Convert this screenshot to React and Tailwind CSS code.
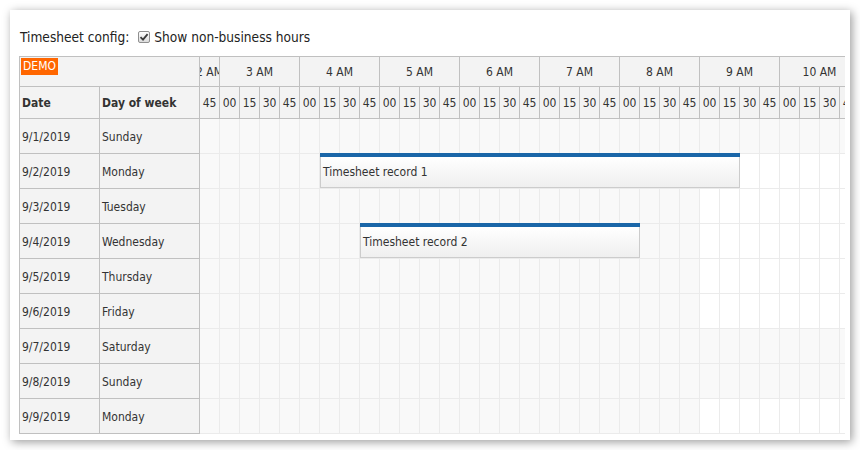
import React from 'react';

const rows = [
  ['9/1/2019', 'Sunday', false],
  ['9/2/2019', 'Monday', true],
  ['9/3/2019', 'Tuesday', true],
  ['9/4/2019', 'Wednesday', true],
  ['9/5/2019', 'Thursday', true],
  ['9/6/2019', 'Friday', true],
  ['9/7/2019', 'Saturday', false],
  ['9/8/2019', 'Sunday', false],
  ['9/9/2019', 'Monday', true],
  ['9/10/2019', 'Tuesday', true],
];

const hours = ['3 AM', '4 AM', '5 AM', '6 AM', '7 AM', '8 AM', '9 AM', '10 AM'];
const minutes = ['45', ...hours.flatMap(() => ['00', '15', '30', '45'])];

const events = [
  { text: 'Timesheet record 1', left: 120, top: 34, width: 420 },
  { text: 'Timesheet record 2', left: 160, top: 104, width: 280 },
];

const Check = () => (
  <span className="w-[12px] h-[12px] border border-[#8f8f8f] rounded-[2px] bg-gradient-to-b from-[#fdfdfd] to-[#dcdcdc] flex items-center justify-center">
    <svg width="10" height="10" viewBox="0 0 10 10">
      <path d="M1.5 5.2 L4 7.6 L8.6 2.2" fill="none" stroke="#3a3a3a" strokeWidth="1.8" />
    </svg>
  </span>
);

export default function App() {
  return (
    <div className="pt-[10px] pl-[10px] bg-white h-[450px] font-['DejaVu_Sans_Condensed','DejaVu_Sans',sans-serif] text-[#333]">
      <div className="w-[840px] h-[430px] bg-white shadow-[2px_2px_9px_rgba(0,0,0,0.4)] pl-[9px] pt-[17px]">
        {/* config row */}
        <div className="flex items-center h-[20px] pl-[1px] text-[13.6px] text-[#222]">
          <span>Timesheet config:</span>
          <label className="flex items-center gap-[4px] ml-[9px]">
            <Check />
            <span>Show non-business hours</span>
          </label>
        </div>

        {/* scheduler */}
        <div className="mt-[9px] w-[826px] h-[378px] overflow-hidden border-l border-t border-[#c0c0c0] flex text-[12px]">
          {/* row headers */}
          <div className="w-[180px] shrink-0 bg-[#f3f3f3]">
            <div className="h-[30px] border-b border-r border-[#c0c0c0] pl-[1px]">
              <span className="inline-block bg-[#ff6600] text-white text-[12px] leading-[17px] px-[2px]">DEMO</span>
            </div>
            <div className="h-[32px] flex border-b border-[#c0c0c0] font-bold">
              <div className="w-[80px] border-r border-[#c0c0c0] flex items-center pl-[2px]">Date</div>
              <div className="w-[100px] border-r border-[#c0c0c0] flex items-center pl-[2px]">Day of week</div>
            </div>
            {rows.map(([d, w]) => (
              <div key={d} className="h-[35px] flex border-b border-[#c0c0c0]">
                <div className="w-[80px] border-r border-[#c0c0c0] flex items-center pl-[2px] pt-[1px]">{d}</div>
                <div className="w-[100px] border-r border-[#c0c0c0] flex items-center pl-[2px] pt-[1px]">{w}</div>
              </div>
            ))}
          </div>

          {/* time area */}
          <div className="flex-1 overflow-hidden">
            <div className="w-[660px]">
              <div className="h-[30px] flex bg-[#f3f3f3] border-b border-[#c0c0c0]">
                <div className="w-[20px] shrink-0 border-r border-[#c0c0c0] overflow-hidden flex items-center justify-center whitespace-nowrap">
                  <span>2 AM</span>
                </div>
                {hours.map(h => (
                  <div key={h} className="w-[80px] shrink-0 border-r border-[#c0c0c0] flex items-center justify-center">{h}</div>
                ))}
              </div>
              <div className="h-[32px] flex bg-[#f3f3f3] border-b border-[#c0c0c0]">
                {minutes.map((m, i) => (
                  <div key={i} className="w-[20px] shrink-0 border-r border-[#c0c0c0] flex items-center justify-center">{m}</div>
                ))}
              </div>
              <div className="relative">
                {rows.map(([d, , biz]) => (
                  <div key={d} className="h-[35px] flex border-b border-[#ebebeb]">
                    {minutes.map((m, i) => (
                      <div
                        key={i}
                        className={'w-[20px] shrink-0 border-r border-[#ebebeb] ' + (biz && i >= 25 ? 'bg-white' : 'bg-[#f9f9f9]')}
                      />
                    ))}
                  </div>
                ))}
                {events.map(e => (
                  <div
                    key={e.text}
                    className="absolute h-[35px] flex flex-col"
                    style={{ left: e.left, top: e.top, width: e.width }}
                  >
                    <div className="h-[4px] bg-[#1a66a8]" />
                    <div className="flex-1 border-l border-r border-b border-[#cccccc] bg-gradient-to-b from-white to-[#efefef] flex items-center pl-[2px] text-[#333]">
                      {e.text}
                    </div>
                  </div>
                ))}
              </div>
            </div>
          </div>
        </div>
      </div>
    </div>
  );
}
